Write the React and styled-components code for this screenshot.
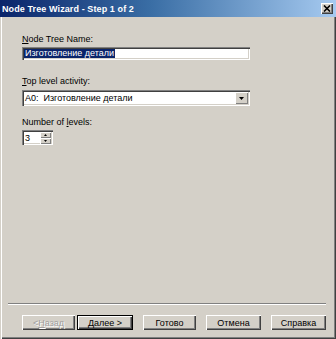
import React from 'react';
import styled, { createGlobalStyle } from 'styled-components';

const GlobalStyle = createGlobalStyle`
  html, body {
    margin: 0;
    padding: 0;
    background: #d4d0c8;
  }
  body {
    font-family: "Liberation Sans", Arial, sans-serif;
  }
`;

const Window = styled.div`
  width: 336px;
  height: 339px;
  box-sizing: border-box;
  display: flex;
  flex-direction: column;
  background: #d4d0c8;
  box-shadow: inset 1px 0 0 #d4d0c8, inset 2px 0 0 #ffffff,
    inset -1px -1px 0 #404040, inset -2px -2px 0 #808080;
  font-size: 9px;
  color: #000;
`;

const TitleBar = styled.div`
  height: 17px;
  flex: 0 0 auto;
  display: flex;
  align-items: center;
  justify-content: space-between;
  padding: 0 3px 0 2px;
  background: linear-gradient(to right, #0a246a 0%, #3a6ea5 45%, #a6caf0 100%);
`;

const Title = styled.span`
  color: #fff;
  font-weight: bold;
  font-size: 9px;
  letter-spacing: 0.1px;
`;

const CloseButton = styled.div`
  width: 12px;
  height: 11px;
  display: flex;
  align-items: center;
  justify-content: center;
  background: #d4d0c8;
  box-shadow: inset 1px 1px 0 #fff, inset -1px -1px 0 #404040,
    inset -2px -2px 0 #808080;
`;

const Body = styled.div`
  flex: 1;
  display: flex;
  flex-direction: column;
  padding: 17px 10px 9px 22px;
`;

const Form = styled.div`
  flex: 1;
  display: flex;
  flex-direction: column;
  padding-right: 76px;
`;

const Label = styled.div`
  height: 10px;
  line-height: 10px;
  margin-bottom: ${(p) => p.$gap || 4}px;
  margin-top: ${(p) => p.$top || 0}px;
`;

const Sunken = styled.div`
  box-sizing: border-box;
  height: ${(p) => p.$h || 13}px;
  width: ${(p) => (p.$w ? `${p.$w}px` : '100%')};
  background: #fff;
  display: flex;
  align-items: center;
  box-shadow: inset 1px 1px 0 #808080, inset 2px 2px 0 #404040,
    inset -1px -1px 0 #fff, inset -2px -2px 0 #d4d0c8;
  padding: 2px;
`;

const Selected = styled.span`
  background: #0a246a;
  color: #fff;
  line-height: 9px;
  padding: 0 1px;
`;

const ComboText = styled.span`
  flex: 1;
  padding-left: 1px;
  white-space: pre;
`;

const SmallButton = styled.div`
  box-sizing: border-box;
  width: ${(p) => p.$w || 12}px;
  height: ${(p) => p.$h || 11}px;
  background: #d4d0c8;
  display: flex;
  align-items: center;
  justify-content: center;
  box-shadow: inset 1px 1px 0 #fff, inset -1px -1px 0 #808080;
`;

const SpinText = styled.span`
  flex: 1;
  padding-left: 1px;
`;

const SpinButtons = styled.div`
  display: flex;
  flex-direction: column;
`;

const Separator = styled.div`
  height: 0;
  margin: 0 0 10px -14px;
  border-top: 1px solid #808080;
  border-bottom: 1px solid #fff;
`;

const ButtonRow = styled.div`
  display: flex;
  align-items: center;
`;

const Button = styled.div`
  box-sizing: border-box;
  width: ${(p) => p.$w || 55}px;
  height: 15px;
  margin-right: ${(p) => p.$mr ?? 10}px;
  display: flex;
  align-items: center;
  justify-content: center;
  background: #d4d0c8;
  color: ${(p) => (p.$disabled ? '#a0a0a0' : '#000')};
  text-shadow: ${(p) => (p.$disabled ? '1px 1px 0 #fff' : 'none')};
  box-shadow: ${(p) =>
    p.$default
      ? 'inset 0 0 0 1px #000, inset 1px 1px 0 1px #fff, inset -1px -1px 0 1px #404040, inset -2px -2px 0 1px #808080'
      : 'inset 1px 1px 0 #fff, inset -1px -1px 0 #404040, inset -2px -2px 0 #808080'};
`;

const Arrow = ({ up, w = 5, h = 3 }) => (
  <svg width={w} height={h} viewBox={`0 0 ${w} ${h}`}>
    <path
      d={up ? `M${w / 2} 0 L${w} ${h} L0 ${h} Z` : `M0 0 L${w} 0 L${w / 2} ${h} Z`}
      fill="#000"
    />
  </svg>
);

export default function App() {
  return (
    <>
      <GlobalStyle />
      <Window>
        <TitleBar>
          <Title>Node Tree Wizard - Step 1 of 2</Title>
          <CloseButton>
            <svg width="8" height="7" viewBox="0 0 8 7">
              <path d="M1 0.5 L7 6.5 M7 0.5 L1 6.5" stroke="#000" strokeWidth="1.6" />
            </svg>
          </CloseButton>
        </TitleBar>
        <Body>
          <Form>
            <Label $gap={3}>
              <u>N</u>ode Tree Name:
            </Label>
            <Sunken>
              <Selected>Изготовление детали</Selected>
            </Sunken>
            <Label $top={16} $gap={4}>
              <u>T</u>op level activity:
            </Label>
            <Sunken $h={16}>
              <ComboText>A0:  Изготовление детали</ComboText>
              <SmallButton $w={13} $h={12}>
                <Arrow />
              </SmallButton>
            </Sunken>
            <Label $top={11} $gap={3}>
              Number of <u>l</u>evels:
            </Label>
            <Sunken $w={31} $h={15}>
              <SpinText>3</SpinText>
              <SpinButtons>
                <SmallButton $w={11} $h={6}>
                  <Arrow up w={3} h={2} />
                </SmallButton>
                <SmallButton $w={11} $h={6}>
                  <Arrow w={3} h={2} />
                </SmallButton>
              </SpinButtons>
            </Sunken>
          </Form>
          <Separator />
          <ButtonRow>
            <Button $w={53} $mr={2} $disabled>
              &lt; <u>Н</u>азад
            </Button>
            <Button $w={56} $default>
              Далее &gt;
            </Button>
            <Button $w={53}>Готово</Button>
            <Button $w={55}>Отмена</Button>
            <Button $w={55} $mr={0}>Справка</Button>
          </ButtonRow>
        </Body>
      </Window>
    </>
  );
}
